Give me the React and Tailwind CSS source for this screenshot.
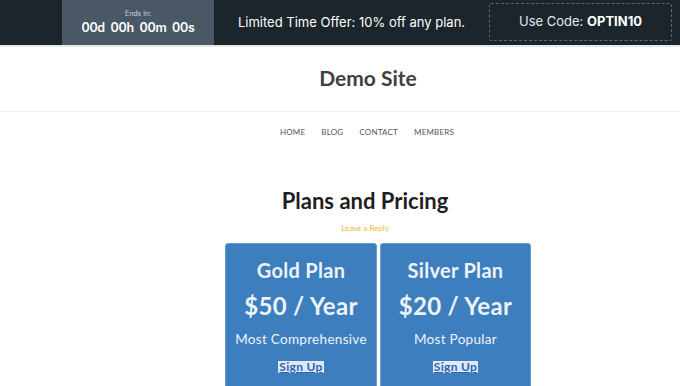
export default function App() {
  const poppins = { fontFamily: 'Inter, "Liberation Sans", sans-serif' };
  const karla = { fontFamily: 'Lato, "Liberation Sans", sans-serif' };
  const plans = [
    { name: "Gold Plan", price: "$50 / Year", desc: "Most Comprehensive", w: "w-[152px]" },
    { name: "Silver Plan", price: "$20 / Year", desc: "Most Popular", w: "w-[151px]" },
  ];
  return (
    <div className="w-[680px] h-[386px] overflow-hidden bg-white" style={karla}>
      <div className="h-[47px] bg-[#1c252c] border-b-2 border-[#e6e8ea] flex items-stretch" style={poppins}>
        <div className="w-[62px]" />
        <div className="w-[152px] bg-[#4a5866] flex flex-col items-center justify-center">
          <div className="text-[7px] text-[#d0d5da] leading-none mb-[5px]">Ends in:</div>
          <div className="text-[12.5px] font-semibold text-white leading-none tracking-[-0.3px]">00d&nbsp; 00h&nbsp; 00m&nbsp; 00s</div>
        </div>
        <div className="flex-1 flex items-center justify-center text-[13px] text-white">
          Limited Time Offer: 10% off any plan.
        </div>
        <div className="w-[183px] my-[3px] mr-[8px] border border-dashed border-[#5a6670] rounded-[2px] flex items-center justify-center text-[13px] text-[#e6e8ea] mb-[4px]">
          Use Code:&nbsp;<span className="font-bold text-white">OPTIN10</span>
        </div>
      </div>
      <div className="h-[65px] flex items-center justify-center border-b border-[#f0f0f0] pl-[56px]">
        <div className="text-[21px] font-bold text-[#404040] mt-[-3px]">Demo Site</div>
      </div>
      <nav className="flex justify-center gap-[16px] mt-[14px] pl-[54px] text-[8px] uppercase text-[#555] tracking-[0.2px]">
        <span>Home</span>
        <span>Blog</span>
        <span>Contact</span>
        <span>Members</span>
      </nav>
      <div className="text-center mt-[52px] pl-[50px] text-[22px] font-bold text-[#1f1f1f] leading-none">Plans and Pricing</div>
      <div className="text-center mt-[12px] pl-[50px] text-[8px] text-[#f2b53c] leading-none">Leave a Reply</div>
      <div className="flex justify-center gap-[3px] mt-[11px] pl-[76px]">
        {plans.map((p) => (
          <div key={p.name} className={`${p.w} h-[150px] bg-[#3d7ebf] rounded-t-[3px] border border-[#6a9ad0] flex flex-col items-center text-white`}>
            <div className="mt-[16px] text-[20px] font-bold leading-none text-[#eef3f9] tracking-[0.3px]">{p.name}</div>
            <div className="mt-[14px] text-[24px] font-bold leading-none text-[#eef3f9] tracking-[0.3px]">{p.price}</div>
            <div className="mt-[15px] text-[13.5px] leading-none text-[#eef3f9] tracking-[0.3px]">{p.desc}</div>
            <div className="mt-[14px] text-[12px] font-bold leading-none underline bg-[#dfe8f6] text-[#2d64b5] px-[1px] tracking-[0.3px]">Sign Up</div>
          </div>
        ))}
      </div>
    </div>
  );
}
